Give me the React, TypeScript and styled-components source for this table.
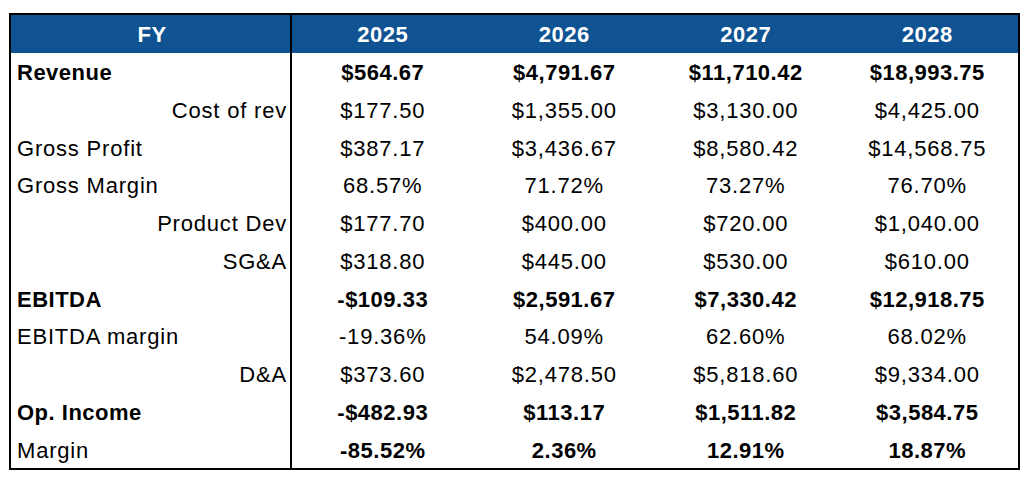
import React from 'react'
import styled, { createGlobalStyle } from 'styled-components'

const GlobalStyle = createGlobalStyle`
  body {
    margin: 0;
    background: #ffffff;
    font-family: 'Liberation Sans', Arial, sans-serif;
  }
`

type Row = {
  label: string
  values: string[]
  bold?: boolean
  indent?: boolean
  boldValues?: boolean
}

const years = ['2025', '2026', '2027', '2028']

const rows: Row[] = [
  { label: 'Revenue', values: ['$564.67', '$4,791.67', '$11,710.42', '$18,993.75'], bold: true },
  { label: 'Cost of rev', values: ['$177.50', '$1,355.00', '$3,130.00', '$4,425.00'], indent: true },
  { label: 'Gross Profit', values: ['$387.17', '$3,436.67', '$8,580.42', '$14,568.75'] },
  { label: 'Gross Margin', values: ['68.57%', '71.72%', '73.27%', '76.70%'] },
  { label: 'Product Dev', values: ['$177.70', '$400.00', '$720.00', '$1,040.00'], indent: true },
  { label: 'SG&A', values: ['$318.80', '$445.00', '$530.00', '$610.00'], indent: true },
  { label: 'EBITDA', values: ['-$109.33', '$2,591.67', '$7,330.42', '$12,918.75'], bold: true },
  { label: 'EBITDA margin', values: ['-19.36%', '54.09%', '62.60%', '68.02%'] },
  { label: 'D&A', values: ['$373.60', '$2,478.50', '$5,818.60', '$9,334.00'], indent: true },
  { label: 'Op. Income', values: ['-$482.93', '$113.17', '$1,511.82', '$3,584.75'], bold: true },
  { label: 'Margin', values: ['-85.52%', '2.36%', '12.91%', '18.87%'], boldValues: true },
]

const App = () => {
  return (
    <Page>
      <GlobalStyle />
      <Table>
        <HeaderRow>
          <LabelCell $bold $align="center">FY</LabelCell>
          {years.map((y) => (
            <ValueCell key={y} $bold>{y}</ValueCell>
          ))}
        </HeaderRow>
        {rows.map((r) => (
          <BodyRow key={r.label}>
            <LabelCell $bold={r.bold} $align={r.indent ? 'right' : 'left'}>
              {r.label}
            </LabelCell>
            {r.values.map((v, i) => (
              <ValueCell key={i} $bold={r.bold || r.boldValues}>{v}</ValueCell>
            ))}
          </BodyRow>
        ))}
      </Table>
    </Page>
  )
}

export default App

const Page = styled.div`
  padding: 13px 0 0 9px;
`

const Table = styled.div`
  width: 1011px;
  box-sizing: border-box;
  border: 2px solid #000;
  display: flex;
  flex-direction: column;
`

const RowBase = styled.div`
  display: grid;
  grid-template-columns: 281px repeat(4, 1fr);
  height: 37.75px;
  font-size: 22px;
  color: #000;
`

const HeaderRow = styled(RowBase)`
  background: #0f5393;
  color: #fff;
`

const BodyRow = styled(RowBase)``

const CellBase = styled.div<{ $bold?: boolean }>`
  display: flex;
  align-items: center;
  padding-top: 3px;
  box-sizing: border-box;
  white-space: nowrap;
  font-weight: ${(p) => (p.$bold ? 700 : 400)};
  letter-spacing: ${(p) => (p.$bold ? '0.5px' : '0.8px')};
`

const LabelCell = styled(CellBase)<{ $align: 'left' | 'right' | 'center' }>`
  border-right: 2px solid #000;
  justify-content: ${(p) => (p.$align === 'left' ? 'flex-start' : p.$align === 'right' ? 'flex-end' : 'center')};
  padding-left: 6px;
  padding-right: 3px;
`

const ValueCell = styled(CellBase)`
  justify-content: center;
`
